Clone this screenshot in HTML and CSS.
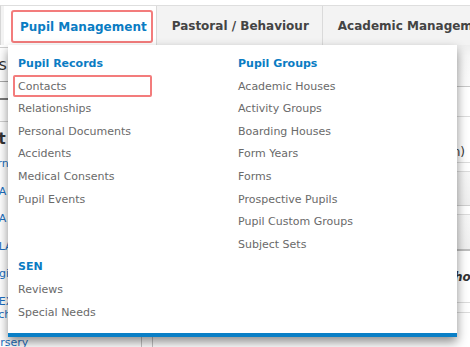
FILE: index.html
```html
<!DOCTYPE html>
<html lang="en">
<head>
  <meta charset="UTF-8">
  <meta name="viewport" content="width=device-width, initial-scale=1.0">
  <title>Pupil Management</title>
  <link rel="stylesheet" href="styles.css">
</head>
<body>
  <nav class="topnav">
    <div class="tab active"><a class="tab-link" href="#">Pupil Management</a></div>
    <div class="tab"><a class="tab-link" href="#">Pastoral / Behaviour</a></div>
    <div class="tab"><a class="tab-link" href="#">Academic Management</a></div>
  </nav>

  <div class="page">
    <aside class="side">
      <div class="side-head">Users</div>
      <div class="side-search"></div>
      <div class="side-filter"></div>
      <div class="side-title">At a glance</div>
      <ul class="side-list">
        <li><a href="#">Fern House</a></li>
        <li><a href="#">Y1A Form</a></li>
        <li><a href="#">Y2A Form</a></li>
        <li><a href="#">Y1LA Set</a></li>
        <li><a href="#">Regional</a></li>
        <li><a href="#">Y1EX Trip<br>Exchange</a></li>
        <li><a href="#">Nursery</a></li>
      </ul>
    </aside>
    <main class="main">
      <div class="main-head"></div>
      <div class="main-row"></div>
      <div class="main-row tall">Form Tutor (Main)</div>
      <div class="main-band"></div>
      <div class="main-band last"></div>
      <div class="main-note">There are no records to show here</div>
      <div class="main-row short"></div>
    </main>
  </div>

  <!-- open dropdown for the active tab -->
  <div class="dropdown">
    <div class="menu-cols">
      <div class="menu-group">
        <div class="menu-heading">Pupil Records</div>
        <a class="menu-item focused" href="#">Contacts</a>
        <a class="menu-item" href="#">Relationships</a>
        <a class="menu-item" href="#">Personal Documents</a>
        <a class="menu-item" href="#">Accidents</a>
        <a class="menu-item" href="#">Medical Consents</a>
        <a class="menu-item" href="#">Pupil Events</a>
      </div>
      <div class="menu-group">
        <div class="menu-heading">Pupil Groups</div>
        <a class="menu-item" href="#">Academic Houses</a>
        <a class="menu-item" href="#">Activity Groups</a>
        <a class="menu-item" href="#">Boarding Houses</a>
        <a class="menu-item" href="#">Form Years</a>
        <a class="menu-item" href="#">Forms</a>
        <a class="menu-item" href="#">Prospective Pupils</a>
        <a class="menu-item" href="#">Pupil Custom Groups</a>
        <a class="menu-item" href="#">Subject Sets</a>
      </div>
      <div class="menu-group">
        <div class="menu-heading">SEN</div>
        <a class="menu-item" href="#">Reviews</a>
        <a class="menu-item" href="#">Special Needs</a>
      </div>
    </div>
  </div>
</body>
</html>
```

FILE: styles.css
```css
body {
  font-family: 'DejaVu Sans', Verdana, sans-serif;
  margin: 0;
  padding: 5px 0 0 0;
  background: #fff;
  color: #333;
  overflow: hidden;
  height: 342px;
}
a {
  text-decoration: none;
}
.topnav {
  display: flex;
  height: 39px;
  border-top: 1px solid #dedede;
  background: #f3f3f3;
  padding-left: 3px;
  border-left: 1px solid #d6d6d6;
  white-space: nowrap;
}
.tab {
  display: flex;
  align-items: center;
  padding: 1px 13px 0 15px;
  border-right: 1px solid #dadada;
}
.tab-link {
  font-size: 12px;
  font-weight: bold;
  color: #444;
}
.tab.active {
  background: #fff;
  padding: 4px 3px 2px 7px;
  align-items: stretch;
}
.tab.active .tab-link {
  color: #0a7cc3;
  border: 2px solid #f37c7c;
  border-radius: 3px;
  padding: 1px 4px 0 7px;
  line-height: 28px;
}
.page {
  display: flex;
}
.side {
  flex: none;
  width: 141px;
  border-right: 1px solid #c4c4c4;
  margin-top: 2px;
  border-top: 1px solid #cfcfcf;
}
.side-head {
  height: 33px;
  line-height: 33px;
  font-size: 16px;
  color: #333;
  margin-left: -38px;
  border-bottom: 1px solid #a8a8a8;
}
.side-search {
  height: 16px;
  border-bottom: 2px solid #7a7a7a;
}
.side-filter {
  height: 21px;
  border-bottom: 1px solid #cfcfcf;
}
.side-title {
  font-size: 15px;
  font-weight: bold;
  color: #333;
  padding-top: 5px;
  line-height: 24px;
  margin-left: -13px;
}
.side-list {
  list-style: none;
  margin: 6px 0 0 -15px;
  padding: 0;
}
.side-list li {
  font-size: 11px;
  line-height: 13.5px;
  margin-bottom: 14px;
}
.side-list a {
  color: #1a6fc0;
}
.main {
  flex: 1;
  min-width: 0;
  margin-left: 10px;
  border-left: 1px solid #c4c4c4;
}
.main-head {
  height: 41px;
  background: linear-gradient(#eeeeee, #f7f7f7 30%, #fbfbfb);
  border-bottom: 1px solid #c8c8c8;
}
.main-row {
  height: 29px;
  border-bottom: 1px solid #dcdcdc;
}
.main-row.tall {
  height: 45px;
  line-height: 70px;
  font-size: 12px;
  color: #333;
  text-align: right;
  padding-right: 5px;
  margin-bottom: 8px;
}
.main-row.short {
  height: 9px;
}
.main-band {
  height: 33px;
  background: linear-gradient(#f7f7f7, #efefef);
  border-top: 1px solid #dcdcdc;
  border-bottom: 1px solid #cfcfcf;
  margin-bottom: 8px;
}
.main-band.last {
  height: 34px;
  border-bottom: 2px solid #bdbdbd;
  margin-bottom: 0;
}
.main-note {
  height: 51px;
  line-height: 52px;
  font-size: 12px;
  font-style: italic;
  font-weight: bold;
  color: #333;
  padding-left: 130px;
  white-space: nowrap;
  border-bottom: 1px solid #dcdcdc;
}
.dropdown {
  position: absolute;
  top: 45px;
  left: 8px;
  width: 449px;
  height: 292px;
  box-sizing: border-box;
  background: #fff;
  border-bottom: 4px solid #0a7fc6;
  box-shadow: 0 5px 10px rgba(0, 0, 0, 0.45);
  padding: 7px 5px 0 5px;
}
.menu-cols {
  display: grid;
  grid-template-columns: 220px 220px;
}
.menu-heading {
  font-size: 11px;
  font-weight: bold;
  color: #0a7cc3;
  line-height: 20.6px;
  padding: 2px 0 0 5px;
}
.menu-item {
  display: block;
  width: 139px;
  box-sizing: border-box;
  font-size: 11px;
  color: #6a6a6a;
  line-height: 20.6px;
  padding: 2px 0 0 5px;
  border-radius: 2px;
}
.menu-item:hover {
  color: #0a7cc3;
}
.menu-item.focused {
  outline: 2px solid #f37c7c;
  outline-offset: -2px;
}
```
